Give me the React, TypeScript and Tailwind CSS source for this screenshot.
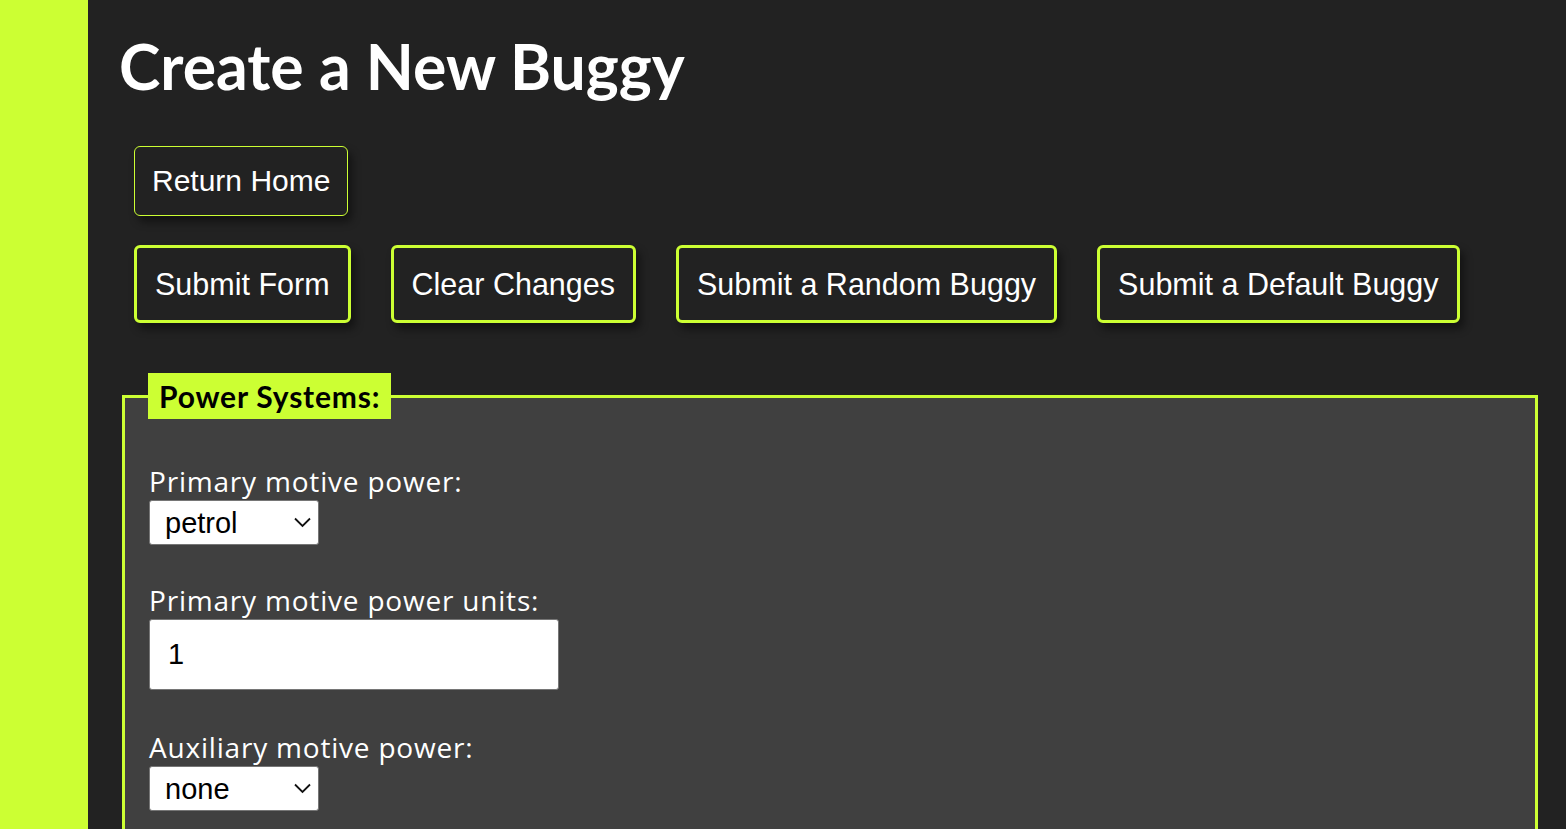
const btn = "font-['Liberation_Sans',Arial,sans-serif] text-[30.5px] leading-[34px] text-white bg-[#222222] rounded-md shadow-[4px_6px_8px_rgba(0,0,0,0.45)]"
const label = "text-white font-['Open_Sans','Lato',sans-serif] text-[28px] leading-[34px] tracking-[0.8px]"

function Select({ value }: { value: string }) {
  return (
    <div className="relative w-[170px] h-[45px] mt-[2px]">
      <select
        defaultValue={value}
        className="appearance-none w-full h-full bg-white text-black rounded-[3px] border border-[#767676] pl-[15px] font-['Liberation_Sans',Arial,sans-serif] text-[29px] leading-[32px]"
      >
        <option value={value}>{value}</option>
      </select>
      <svg className="absolute right-[8px] top-[17px] pointer-events-none" width="17" height="11" viewBox="0 0 17 11" fill="none">
        <polyline points="1,1.5 8.5,9 16,1.5" stroke="#111" strokeWidth="1.8" />
      </svg>
    </div>
  )
}

export default function App() {
  return (
    <div className="flex min-h-[829px] h-[829px] overflow-hidden bg-[#222222] font-['Lato','Noto_Sans',sans-serif]">
      <div className="w-[88px] shrink-0 bg-[#ccff33]" />
      <main className="flex-1 pl-[31px] pr-[28px]">
        <h1 className="mt-[28px] text-[62.5px] leading-[76px] font-bold text-white">Create a New Buggy</h1>

        <div className="ml-[15px] mt-[42px]">
          <button className={`${btn} !text-[30px] border border-[#ccff33] px-[17px] py-[17px]`}>Return Home</button>
        </div>

        <div className="ml-[15px] mt-[29px] flex gap-[40px]">
          <button className={`${btn} border-[3px] border-[#ccff33] px-[18px] py-[19px]`}>Submit Form</button>
          <button className={`${btn} border-[3px] border-[#ccff33] px-[18px] py-[19px]`}>Clear Changes</button>
          <button className={`${btn} border-[3px] border-[#ccff33] px-[18px] py-[19px]`}>Submit a Random Buggy</button>
          <button className={`${btn} border-[3px] border-[#ccff33] px-[18px] py-[19px]`}>Submit a Default Buggy</button>
        </div>

        <fieldset className="mt-[50px] ml-[3px] border-[3px] border-[#ccff33] bg-[#404040] px-[24px] pb-[40px]">
          <legend className="-ml-[1px] bg-[#ccff33] text-black font-bold text-[30px] leading-[46px] tracking-[0.8px] px-[11px]">Power Systems:</legend>

          <div className="mt-[45px] flex flex-col">
            <label className={label}>Primary motive power:</label>
            <Select value="petrol" />
          </div>

          <div className="mt-[38px] flex flex-col">
            <label className={label}>Primary motive power units:</label>
            <input
              defaultValue="1"
              className="mt-[2px] w-[410px] h-[71px] bg-white text-black rounded-[3px] border border-[#767676] pl-[18px] font-['Liberation_Sans',Arial,sans-serif] text-[29px]"
            />
          </div>

          <div className="mt-[40px] flex flex-col">
            <label className={label}>Auxiliary motive power:</label>
            <Select value="none" />
          </div>
        </fieldset>
      </main>
    </div>
  )
}
